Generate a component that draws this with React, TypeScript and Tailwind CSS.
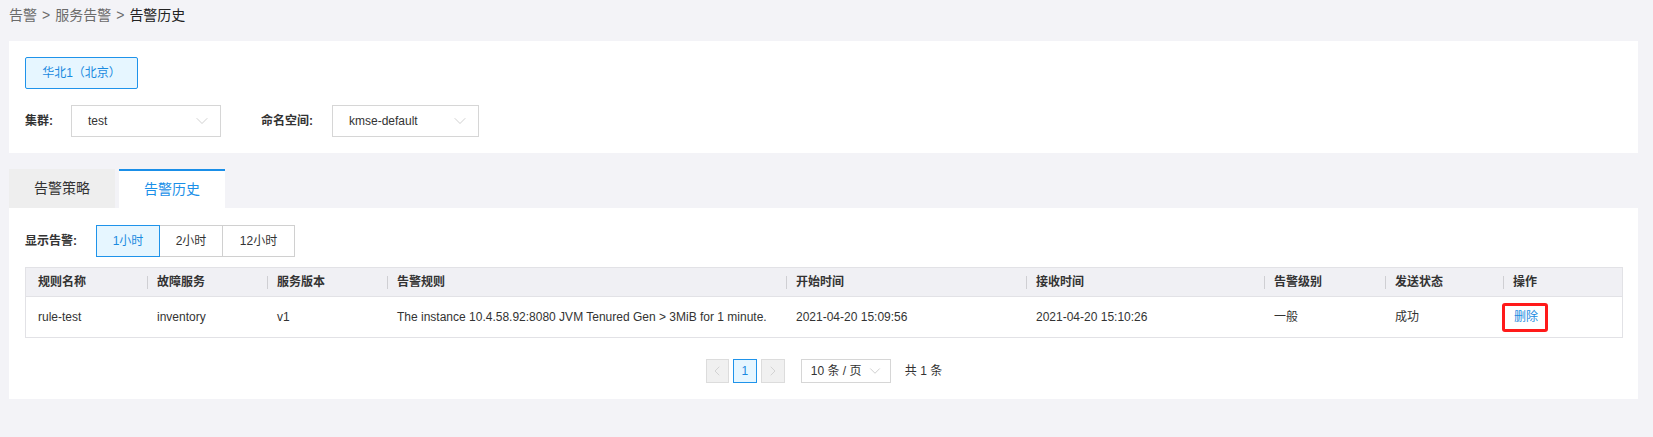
import * as React from "react";
import { ChevronDown, ChevronLeft, ChevronRight } from "lucide-react";

const columns = [
  { key: "name", label: "规则名称", w: "w-[121px]" },
  { key: "service", label: "故障服务", w: "w-[120px]" },
  { key: "version", label: "服务版本", w: "w-[120px]" },
  { key: "rule", label: "告警规则", w: "w-[399px]" },
  { key: "start", label: "开始时间", w: "w-[240px]" },
  { key: "recv", label: "接收时间", w: "w-[238px]" },
  { key: "level", label: "告警级别", w: "w-[121px]" },
  { key: "status", label: "发送状态", w: "w-[118px]" },
  { key: "op", label: "操作", w: "w-[119px]" },
] as const;

const rows = [
  {
    name: "rule-test",
    service: "inventory",
    version: "v1",
    rule: "The instance 10.4.58.92:8080 JVM Tenured Gen > 3MiB for 1 minute.",
    start: "2021-04-20 15:09:56",
    recv: "2021-04-20 15:10:26",
    level: "一般",
    status: "成功",
  },
];

function Select({ value, width }: { value: string; width: string }) {
  return (
    <div
      className={`flex h-8 items-center justify-between border border-[#d6d6d6] bg-white pl-4 pr-[8px] text-[12px] text-[#333] ${width}`}
    >
      <span>{value}</span>
      <ChevronDown className="h-[20px] w-[20px] text-[#b8b8b8]" strokeWidth={0.8} />
    </div>
  );
}

export default function App() {
  const [range, setRange] = React.useState("1小时");

  return (
    <div className="min-h-screen w-full bg-[#f3f3f7] font-['Liberation_Sans','Noto_Sans_CJK_SC',sans-serif]">
      {/* 面包屑 */}
      <div className="flex h-[41px] items-start pl-[9px] pt-[7px] text-[14px] leading-4">
        <span className="text-[#6b6b6b]">告警</span>
        <span className="mx-[5px] text-[#6b6b6b]">&gt;</span>
        <span className="text-[#6b6b6b]">服务告警</span>
        <span className="mx-[5px] text-[#6b6b6b]">&gt;</span>
        <span className="text-[#222]">告警历史</span>
      </div>

      {/* 区域 / 集群 */}
      <section className="ml-[9px] mr-[15px] bg-white px-4 py-4">
        <button className="h-8 w-[113px] rounded-[2px] border border-[#1f93ea] bg-[#e6f6ff] text-[12px] text-[#1a8ae0]">
          华北1（北京）
        </button>
        <div className="mt-4 flex items-center">
          <span className="w-[46px] text-[12px] font-bold text-[#333]">集群:</span>
          <Select value="test" width="w-[150px]" />
          <span className="ml-10 w-[71px] text-[12px] font-bold text-[#333]">命名空间:</span>
          <Select value="kmse-default" width="w-[147px]" />
        </div>
      </section>

      {/* Tabs */}
      <div className="ml-[9px] mt-4 flex gap-1">
        <div className="flex h-[39px] w-[106px] items-center justify-center bg-[#eeeeee] text-[14px] text-[#333]">
          告警策略
        </div>
        <div className="flex h-[39px] w-[106px] items-center justify-center border-t-2 border-[#1a8fe8] bg-white text-[14px] text-[#1a8fe8]">
          告警历史
        </div>
      </div>

      <section className="ml-[9px] mr-[15px] bg-white pb-4 pl-4 pr-[15px] pt-[17px]">
        <div className="flex h-8 items-center">
          <span className="w-[71px] text-[12px] font-bold text-[#333]">显示告警:</span>
          {[
            { t: "1小时", w: "w-[64px]" },
            { t: "2小时", w: "w-[64px]" },
            { t: "12小时", w: "w-[73px]" },
          ].map((b, i) => (
            <button
              key={b.t}
              onClick={() => setRange(b.t)}
              className={`h-8 border text-[12px] ${b.w} ${i > 0 ? "-ml-px" : ""} ${
                range === b.t
                  ? "relative z-10 border-[#1f93ea] bg-[#e6f6ff] text-[#1a8ae0]"
                  : "border-[#d0d0d0] bg-white text-[#333]"
              }`}
            >
              {b.t}
            </button>
          ))}
        </div>

        <div className="mt-[10px] border border-[#e2e2e6]">
          <div className="flex h-[29px] items-center border-b border-[#e2e2e6] bg-[#f0f0f4]">
            {columns.map((c, i) => (
              <div
                key={c.key}
                className={`relative flex h-full items-center text-[12px] font-bold text-[#333] ${c.w} ${
                  i === 0 ? "pl-3" : "pl-[10px]"
                }`}
              >
                {i > 0 && <span className="absolute left-0 top-[8px] h-[13px] w-px bg-[#cfcfd3]" />}
                {c.label}
              </div>
            ))}
          </div>
          {rows.map((r) => (
            <div key={r.name} className="flex h-[40px] items-center text-[12px] text-[#333]">
              <div className="w-[121px] pl-3">{r.name}</div>
              <div className="w-[120px] pl-[10px]">{r.service}</div>
              <div className="w-[120px] pl-[10px]">{r.version}</div>
              <div className="w-[399px] whitespace-nowrap pl-[10px]">{r.rule}</div>
              <div className="w-[240px] pl-[10px]">{r.start}</div>
              <div className="w-[238px] pl-[10px]">{r.recv}</div>
              <div className="w-[121px] pl-[10px]">{r.level}</div>
              <div className="w-[118px] pl-[10px]">{r.status}</div>
              <div className="w-[119px] pl-0">
                <span className="-ml-px inline-flex h-[29px] w-[46px] items-center rounded-[3px] border-[3px] border-[#ff1a1a] pl-[9px] text-[#1a8ae0]">
                  删除
                </span>
              </div>
            </div>
          ))}
        </div>

        {/* 分页 */}
        <div className="mt-[21px] flex items-center justify-center text-[12px] text-[#333]">
          <div className="flex h-6 w-[23px] items-center justify-center border border-[#dcdcdc] bg-[#f0f0f0]">
            <ChevronLeft className="h-[16px] w-[16px] text-[#c4c4c4]" strokeWidth={1} />
          </div>
          <div className="ml-[4px] flex h-6 w-[24px] items-center justify-center border border-[#1f93ea] bg-[#e6f6ff] text-[#1a8ae0]">
            1
          </div>
          <div className="ml-[4px] flex h-6 w-[24px] items-center justify-center border border-[#dcdcdc] bg-[#f0f0f0]">
            <ChevronRight className="h-[16px] w-[16px] text-[#c4c4c4]" strokeWidth={1} />
          </div>
          <div className="ml-4 flex h-6 w-[90px] items-center justify-between border border-[#d6d6d6] pl-[9px] pr-[6px]">
            <span>10 条 / 页</span>
            <ChevronDown className="h-[18px] w-[18px] text-[#b8b8b8]" strokeWidth={0.9} />
          </div>
          <span className="ml-[14px]">共 1 条</span>
        </div>
      </section>
    </div>
  );
}
